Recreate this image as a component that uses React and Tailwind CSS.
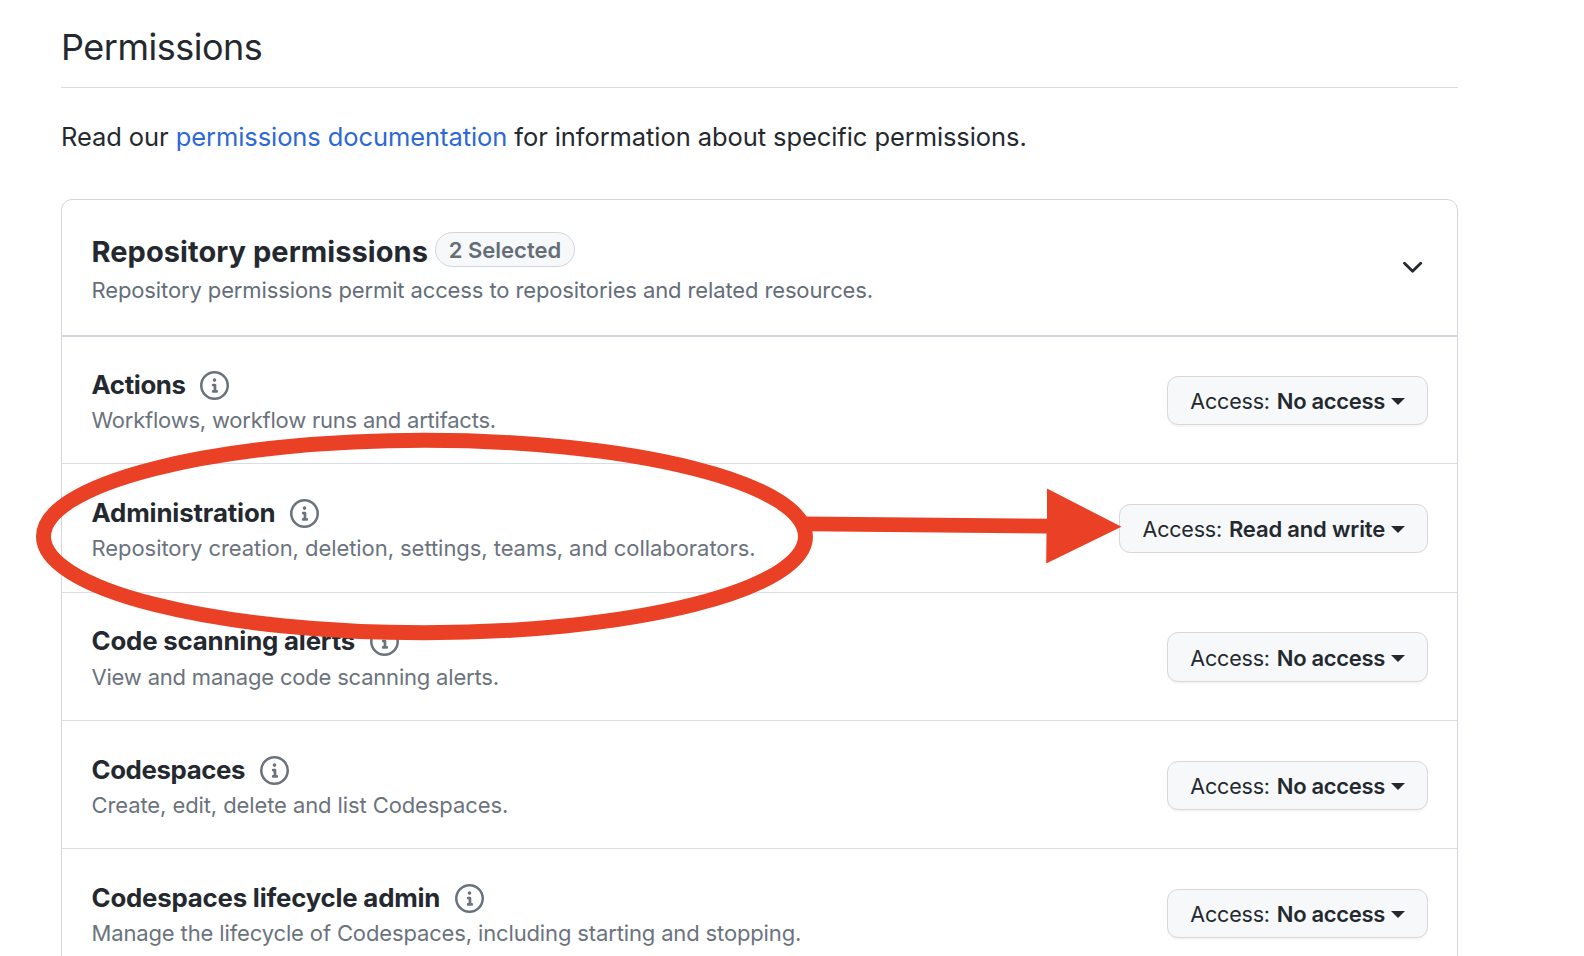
import React from "react";

const permissions = [
  { name: "Actions", description: "Workflows, workflow runs and artifacts.", access: "No access", row: "h-[126px]", body: "pt-[31px]", title: "tracking-[-0.35px]", text: "mt-1 tracking-[-0.22px]", button: "mt-[39px] h-[49px] w-[261px] tracking-[-0.32px] shadow-[0_2px_0_rgba(27,31,36,0.04)]" },
  { name: "Administration", description: "Repository creation, deletion, settings, teams, and collaborators.", access: "Read and write", row: "h-[129px] border-t", body: "pt-[32px]", title: "tracking-[-0.13px]", text: "mt-1 tracking-[-0.06px]", button: "mt-[40px] h-[49px] w-[309px] tracking-[-0.16px]" },
  { name: "Code scanning alerts", description: "View and manage code scanning alerts.", access: "No access", row: "h-[128px] border-t", body: "pt-[31px]", title: "tracking-[-0.18px]", text: "mt-[5px] tracking-[-0.2px]", button: "mt-[39px] h-[50px] w-[261px] tracking-[-0.32px] shadow-[0_2px_0_rgba(27,31,36,0.04)]" },
  { name: "Codespaces", description: "Create, edit, delete and list Codespaces.", access: "No access", row: "h-[128px] border-t", body: "pt-[32px]", title: "tracking-[-0.39px]", text: "mt-1 tracking-[-0.1px]", button: "mt-[40px] h-[49px] w-[261px] tracking-[-0.32px] shadow-[0_2px_0_rgba(27,31,36,0.04)]" },
  { name: "Codespaces lifecycle admin", description: "Manage the lifecycle of Codespaces, including starting and stopping.", access: "No access", row: "h-[128px] border-t", body: "pt-[32px]", title: "tracking-[-0.2px]", text: "mt-1 tracking-[-0.14px]", button: "mt-[40px] h-[49px] w-[261px] tracking-[-0.32px] shadow-[0_2px_0_rgba(27,31,36,0.04)]" },
];

function InfoIcon() {
  return (
    <svg viewBox="0 0 16 16" className="size-[29px] shrink-0 fill-[#6a737d]" aria-hidden="true">
      <path fillRule="evenodd" d="M8 1.4a6.6 6.6 0 100 13.2 6.6 6.6 0 000-13.2zM0 8a8 8 0 1116 0A8 8 0 010 8zm6.5-.25A.75.75 0 017.25 7h1a.75.75 0 01.75.75v2.75h.25a.75.75 0 010 1.5h-2a.75.75 0 010-1.5h.25v-2h-.25a.75.75 0 01-.75-.75zM8 6a1 1 0 100-2 1 1 0 000 2z" />
    </svg>
  );
}

function AccessButton({ access, className }) {
  return (
    <button className={`flex shrink-0 items-center justify-end rounded-[11px] border border-[#d5d8dc] bg-[#f6f8fa] pt-[2px] pr-[22px] text-[22px] whitespace-nowrap text-[#24292f] ${className}`}>
      <span className="text-[21.5px] tracking-[-0.2px]">Access:</span>
      <span className="ml-[7px] font-semibold">{access}</span>
      <svg viewBox="0 0 14 7" className="ml-[6px] h-[7px] w-[14px] fill-current" aria-hidden="true">
        <path d="M0 0h14L7 7z" />
      </svg>
    </button>
  );
}

function Annotation() {
  return (
    <svg viewBox="0 0 1584 956" className="pointer-events-none absolute top-0 left-0 h-[956px] w-[1584px]" aria-hidden="true">
      <ellipse cx="424.5" cy="536.5" rx="381" ry="96.3" fill="none" stroke="#ea4025" strokeWidth="15" />
      <path d="M804 516.4 1047 518.7V488.6L1121.5 526.7 1046.2 563.4 1046.5 533.6 808 531.2z" fill="#ea4025" />
    </svg>
  );
}

export default function App() {
  return (
    <div className="relative h-[956px] w-[1584px] overflow-hidden bg-white pl-[61px] font-['Inter','Noto_Sans',sans-serif] text-[#24292f]">
      <main className="w-[1397px]">
        <h2 className="border-b border-[#d8dbdf] pt-[23px] pb-4 text-[36px] leading-[48px] font-normal tracking-[-0.5px]">Permissions</h2>
        <p className="mt-[31px] text-[25.5px] leading-9 tracking-[-0.08px]">
          Read our <a className="text-[#2d68d8]">permissions documentation</a> for information about specific permissions.
        </p>
        <section className="mt-11 h-[800px] rounded-t-[11px] border border-[#d0d7de]">
          <header className="flex h-[137px] items-start justify-between border-b-2 border-[#d0d7de] pr-[34px] pl-[29.5px]">
            <div>
              <div className="flex items-start pt-8">
                <h3 className="mt-[2px] w-[343.5px] text-[29px] leading-9 font-bold tracking-[0.06px] whitespace-nowrap">Repository permissions</h3>
                <span className="flex h-[35px] w-[140px] items-center justify-center rounded-full border border-[#d0d7de] bg-[#f6f8fa] pt-[2px] text-[22px] font-semibold text-[#656d76]">2 Selected</span>
              </div>
              <p className="mt-[6px] text-[22px] leading-7 tracking-[-0.12px] text-[#656e78]">Repository permissions permit access to repositories and related resources.</p>
            </div>
            <svg viewBox="0 0 20 12" className="mt-[61px] h-3 w-5 fill-none stroke-current stroke-[2.8]" aria-hidden="true">
              <path d="M1.5 2.2 9.6 10.3l8.1-8.1" strokeLinecap="round" strokeLinejoin="round" />
            </svg>
          </header>
          {permissions.map((p) => (
            <div key={p.name} className={`flex items-start justify-between border-[#d8dee4] pr-[29px] pl-[29.5px] ${p.row}`}>
              <div className={p.body}>
                <div className="flex items-center gap-[14.5px]">
                  <h4 className={`text-[25.8px] leading-[34px] font-bold ${p.title}`}>{p.name}</h4>
                  <InfoIcon />
                </div>
                <p className={`text-[22px] leading-7 text-[#6b737d] ${p.text}`}>{p.description}</p>
              </div>
              <AccessButton access={p.access} className={p.button} />
            </div>
          ))}
        </section>
      </main>
      <Annotation />
    </div>
  );
}
